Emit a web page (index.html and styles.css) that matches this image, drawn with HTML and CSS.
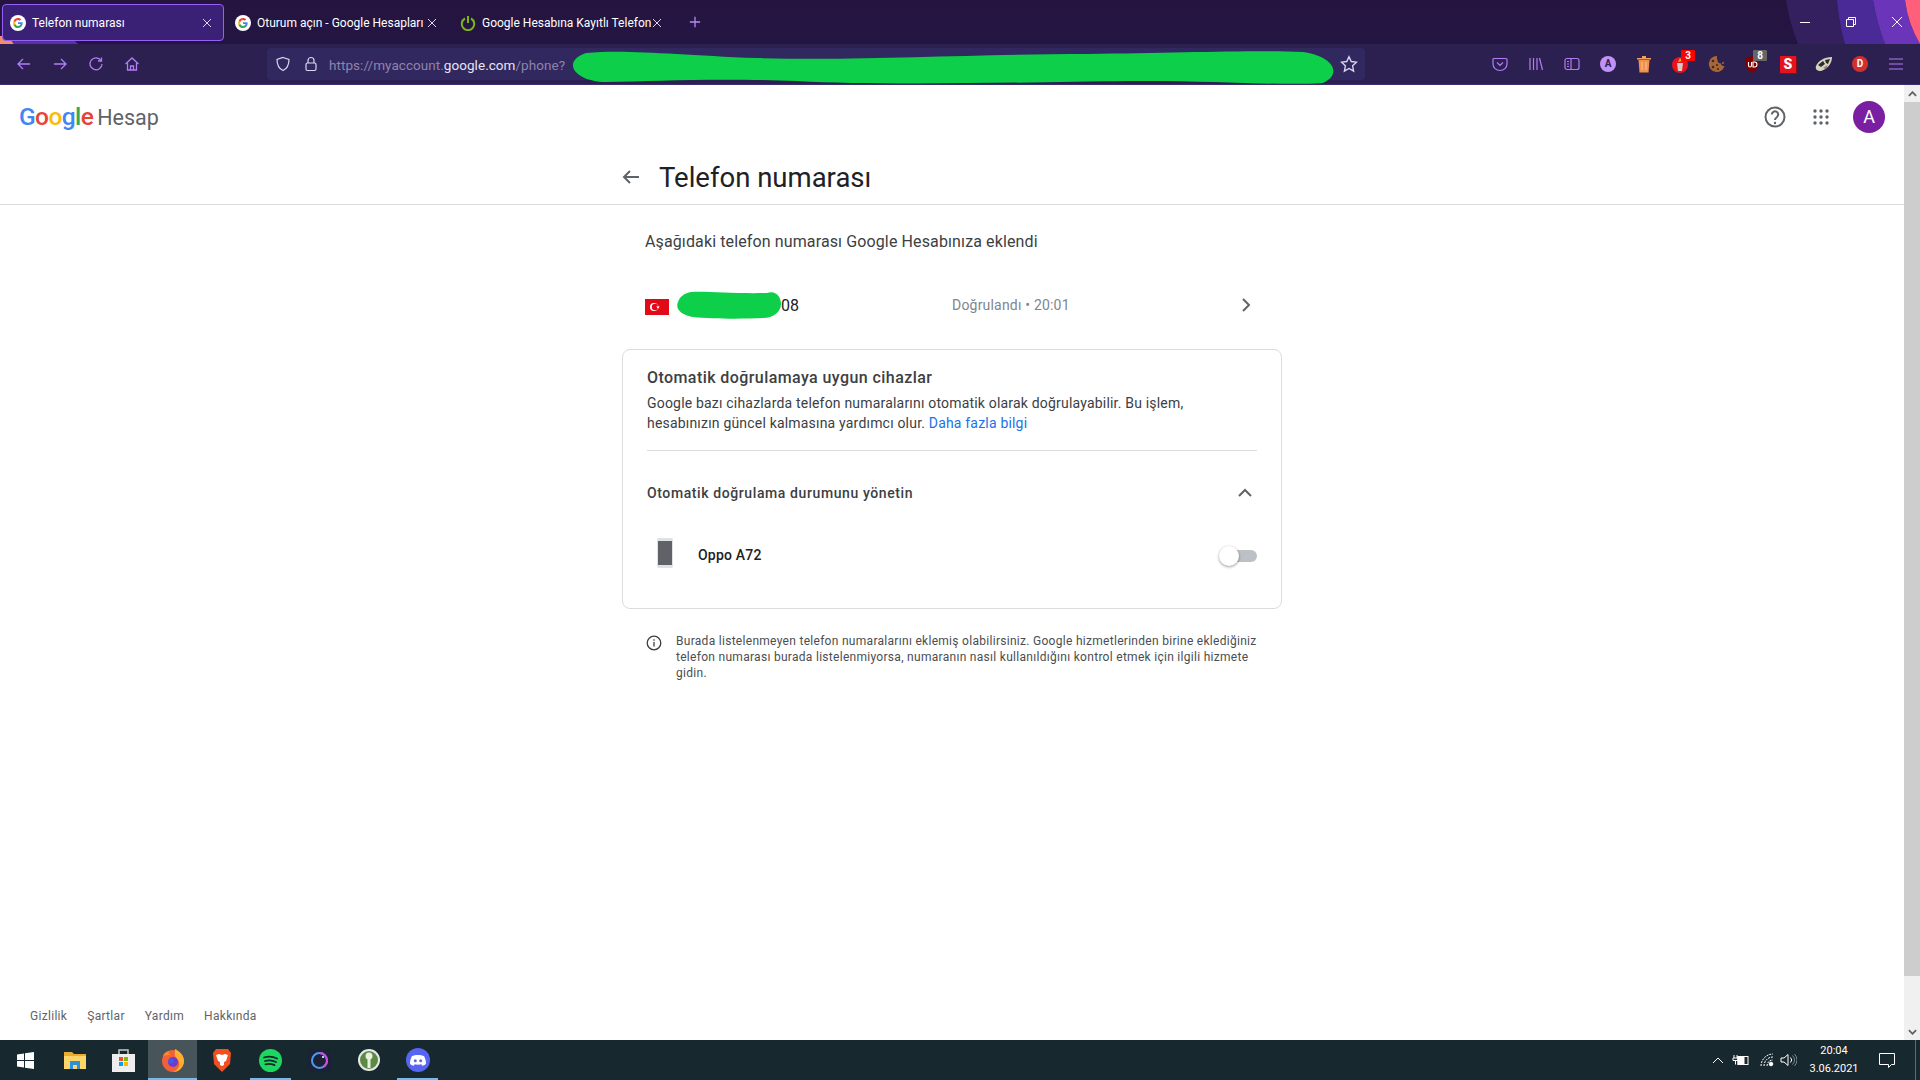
FILE: index.html
```html
<!DOCTYPE html>
<html lang="tr">
<head>
  <meta charset="UTF-8" />
  <title>Telefon numarası</title>
  <link rel="stylesheet" href="styles.css">
</head>
<body>
  <div class="browser">
    <!-- Tab strip -->
    <div class="tabbar">
      <svg class="theme-left" width="90" height="44" viewBox="0 0 90 44"><path d="M0 36 H8 L14 44 H0Z" fill="#f58a6c"/><path d="M8 36 H70 L78 44 H14Z" fill="#5a2fa8"/></svg>
      <svg class="theme-right" width="134" height="44" viewBox="0 0 134 44"><path d="M0 0 H51 Q53 24 59 44 H12 Q4 24 0 0Z" fill="#35205f"/><path d="M51 0 H87 Q91 24 99 44 H59 Q53 24 51 0Z" fill="#4a2a96"/><path d="M87 0 H119 Q122 24 134 44 H99 Q91 24 87 0Z" fill="#6a35b8"/><path d="M119 0 H134 V44 Q122 24 119 0Z" fill="#ff5f7a"/></svg>
      <div class="tab tab-active">
        <svg class="favicon" viewBox="0 0 16 16"><circle cx="8" cy="8" r="8" fill="#fff"/><path d="M12.600 8.200c0-.4 0-.7-.1-1H8v1.900h2.600c-.1.600-.5 1.100-1 1.500v1.200h1.600c.9-.9 1.400-2.100 1.400-3.600z" fill="#4285f4"/><path d="M8 13c1.300 0 2.400-.4 3.200-1.200l-1.600-1.200c-.4.300-1 .5-1.600.5-1.200 0-2.300-.8-2.700-2H3.700v1.300C4.500 12 6.100 13 8 13z" fill="#34a853"/><path d="M5.300 9.100c-.2-.7-.2-1.400 0-2.100V5.700H3.700c-.7 1.300-.7 3.300 0 4.700z" fill="#fbbc05"/><path d="M8 5.100c.7 0 1.300.2 1.800.7l1.400-1.400C10.300 3.500 9.200 3 8 3 6.100 3 4.500 4 3.700 5.700L5.300 7c.4-1.100 1.500-1.900 2.700-1.900z" fill="#ea4335"/></svg>
        <span class="tab-title">Telefon numarası</span>
        <svg class="tab-close" viewBox="0 0 10 10"><path d="M1 1l8 8M9 1l-8 8"/></svg>
      </div>
      <div class="tab">
        <svg class="favicon" viewBox="0 0 16 16"><circle cx="8" cy="8" r="8" fill="#fff"/><path d="M12.600 8.200c0-.4 0-.7-.1-1H8v1.900h2.600c-.1.600-.5 1.100-1 1.500v1.200h1.600c.9-.9 1.400-2.100 1.400-3.600z" fill="#4285f4"/><path d="M8 13c1.300 0 2.400-.4 3.200-1.200l-1.600-1.200c-.4.300-1 .5-1.600.5-1.200 0-2.300-.8-2.700-2H3.700v1.300C4.500 12 6.100 13 8 13z" fill="#34a853"/><path d="M5.300 9.100c-.2-.7-.2-1.400 0-2.100V5.700H3.700c-.7 1.300-.7 3.300 0 4.700z" fill="#fbbc05"/><path d="M8 5.100c.7 0 1.300.2 1.800.7l1.400-1.400C10.300 3.500 9.200 3 8 3 6.100 3 4.500 4 3.700 5.700L5.300 7c.4-1.100 1.500-1.900 2.700-1.900z" fill="#ea4335"/></svg>
        <span class="tab-title">Oturum açın - Google Hesapları</span>
        <svg class="tab-close" viewBox="0 0 10 10"><path d="M1 1l8 8M9 1l-8 8"/></svg>
      </div>
      <div class="tab">
        <svg class="favicon" viewBox="0 0 16 16"><path d="M5 3.500a6.200 6.200 0 1 0 6 0" fill="none" stroke="#7cb518" stroke-width="2"/><path d="M8 1v7" stroke="#7cb518" stroke-width="2"/></svg>
        <span class="tab-title">Google Hesabına Kayıtlı Telefon</span>
        <svg class="tab-close" viewBox="0 0 10 10"><path d="M1 1l8 8M9 1l-8 8"/></svg>
      </div>
      <svg class="new-tab" viewBox="0 0 14 14"><path d="M7 1v12M1 7h12"/></svg>
      <div class="win-controls">
        <svg viewBox="0 0 12 12"><path d="M1 6.500h10"/></svg>
        <svg viewBox="0 0 12 12"><path d="M1.500 3.500h7v7h-7zM3.500 3.500v-2h7v7h-2"/></svg>
        <svg viewBox="0 0 12 12"><path d="M1 1l10 10M11 1L1 11"/></svg>
      </div>
    </div>

    <!-- Nav toolbar -->
    <div class="navbar">
      <svg class="nav-btn" viewBox="0 0 16 16"><path d="M14 8H2.500M7 3L2 8l5 5"/></svg>
      <svg class="nav-btn" viewBox="0 0 16 16"><path d="M2 8h11.500M9 3l5 5-5 5"/></svg>
      <svg class="nav-btn" viewBox="0 0 16 16"><path d="M13 4.500A6 6 0 1 0 14 8M13.500 1.500v3.500H10"/></svg>
      <svg class="nav-btn" viewBox="0 0 16 16"><path d="M1.500 8L8 2l6.500 6M3.500 7v7h9V7M6.500 14v-4h3v4"/></svg>

      <div class="urlbar">
        <svg class="url-icon" viewBox="0 0 16 16"><path d="M8 1.500l6 2c0 5-1.500 9-6 11-4.500-2-6-6-6-11z"/></svg>
        <svg class="url-icon" viewBox="0 0 16 16"><rect x="3" y="7" width="10" height="7.500" rx="1.500"/><path d="M5 7V4.500a3 3 0 0 1 6 0V7"/></svg>
        <span class="url-text">https://myaccount.<b>google.com</b>/phone?</span>
        <svg class="url-star" viewBox="0 0 16 16"><path d="M8 1.500l2 4.300 4.600.6-3.400 3.200.9 4.700L8 12l-4.100 2.300.9-4.700L1.400 6.400 6 5.800z"/></svg>
        <svg class="scribble-url" viewBox="0 0 770 36" preserveAspectRatio="none"><path d="M20 3 C60 -1 110 5 190 8 C300 11 400 4 520 4 C610 3 690 0 735 2 C765 6 775 24 755 33 C710 36 640 30 560 31 C470 32 320 36 230 31 C150 28 90 31 40 32 C10 32 -6 12 20 3Z" fill="#0dcf49"/></svg>
      </div>

      <div class="tools">
        <div class="tool"><svg class="ico-line" viewBox="0 0 16 16"><path d="M2 2.500h12a1 1 0 0 1 1 1V8a7 6.500 0 0 1-14 0V3.500a1 1 0 0 1 1-1zM5 6.500l3 3 3-3"/></svg></div>
        <div class="tool"><svg class="ico-line" viewBox="0 0 16 16"><path d="M2 2v12M5.500 2v12M9 2v12M11.500 2l3 12"/></svg></div>
        <div class="tool"><svg class="ico-line" viewBox="0 0 16 16"><rect x="1" y="2.500" width="14" height="11" rx="2"/><path d="M7 2.500v11M3 5.500h2M3 8h2M3 10.500h2"/></svg></div>
        <div class="tool"><span class="tool-a">A</span></div>
        <div class="tool"><svg width="16" height="18" viewBox="0 0 16 18"><path d="M1 3h14v1.500H1zM6 1h4v2H6z" fill="#f3a05c"/><path d="M2.500 5h11l-1 12.500h-9z" fill="#f2914a"/><path d="M6 7v8M10 7v8" stroke="#f9c397"/></svg></div>
        <div class="tool">
          <svg width="16" height="18" viewBox="0 0 16 18"><circle cx="8" cy="10" r="8" fill="#e8121b"/><path d="M5 8h6l-1 8H6z" fill="#d9c7c7"/><path d="M6 7l2-4 2 3z" fill="#e8b23a"/></svg>
          <span class="badge badge-red">3</span>
        </div>
        <div class="tool"><svg width="17" height="18" viewBox="0 0 17 18"><path d="M9 1a8 8 0 1 0 7.500 10c-2 .5-3.500-1-3.500-2.500C11 8.500 9 7 9.500 4.500 8.500 3.500 9 2 9 1z" fill="#a5673a"/><circle cx="5" cy="6" r="1.300" fill="#4b2a14"/><circle cx="5" cy="12" r="1.300" fill="#4b2a14"/><circle cx="9" cy="10" r="1.100" fill="#4b2a14"/><circle cx="10" cy="14" r="1.100" fill="#4b2a14"/><circle cx="15" cy="8" r="1" fill="#a5673a"/></svg></div>
        <div class="tool">
          <svg width="16" height="19" viewBox="0 0 16 19"><path d="M8 1l7 2c0 7-1 12-7 15C2 15 1 10 1 3z" fill="#800000"/><path d="M4.500 7v3.500a1.500 1.500 0 0 0 3 0V7M9 7v5h1.500a2.500 2.500 0 0 0 0-5z" fill="none" stroke="#fff" stroke-width="1.100"/></svg>
          <span class="badge badge-grey">8</span>
        </div>
        <div class="tool"><span class="tool-s">S</span></div>
        <div class="tool"><svg width="18" height="16" viewBox="0 0 18 16"><path d="M1 10C3 5 9 1 17 1c0 6-4 12-11 14C2 15 0 13 1 10z" fill="#d8d2c4"/><path d="M3 9l5-4 2 3-4 3zM10 4l5-1-2 5-2-1z" fill="#2e2a26"/><path d="M8 12l5-3-2 4z" fill="#8b7a62"/></svg></div>
        <div class="tool"><span class="tool-d">D</span></div>
        <div class="tool"><svg class="ico-line" viewBox="0 0 16 16"><path d="M1 3h14M1 8h14M1 13h14"/></svg></div>
      </div>
    </div>

    <!-- Page + scrollbar -->
    <div class="viewport">
      <div class="page">
        <header class="gbar">
          <div class="logo">
            <span class="g-blue">G</span><span class="g-red">o</span><span class="g-yellow">o</span><span class="g-blue">g</span><span class="g-green">l</span><span class="g-red">e</span>
            <span class="logo-word">Hesap</span>
          </div>
          <div class="gbar-right">
            <svg class="help" viewBox="0 0 24 24"><circle cx="12" cy="12" r="9.500"/><path d="M8.800 9.500a3.200 3.200 0 1 1 5 2.700c-1.100.8-1.800 1.300-1.800 2.800"/><circle class="dot" cx="12" cy="18" r="1.200"/></svg>
            <svg class="apps" viewBox="0 0 16 16"><circle cx="2" cy="2" r="1.700"/><circle cx="8" cy="2" r="1.700"/><circle cx="14" cy="2" r="1.700"/><circle cx="2" cy="8" r="1.700"/><circle cx="8" cy="8" r="1.700"/><circle cx="14" cy="8" r="1.700"/><circle cx="2" cy="14" r="1.700"/><circle cx="8" cy="14" r="1.700"/><circle cx="14" cy="14" r="1.700"/></svg>
            <div class="avatar">A</div>
          </div>
        </header>

        <div class="titlebar">
          <div class="titlebar-inner">
            <svg class="back" viewBox="0 0 24 24"><path d="M20 12H5M11 6l-6 6 6 6"/></svg>
            <h1>Telefon numarası</h1>
          </div>
        </div>

        <main class="content">
          <p class="intro">Aşağıdaki telefon numarası Google Hesabınıza eklendi</p>

          <div class="phone-row">
            <div class="phone-left">
              <svg class="flag" viewBox="0 0 24 16"><rect width="24" height="16" fill="#e30a17"/><circle cx="9" cy="8" r="4" fill="#fff"/><circle cx="10" cy="8" r="3.200" fill="#e30a17"/><path d="M13 6.300l.5 1.300 1.400 0-1.100.9.400 1.300-1.200-.8-1.100.8.400-1.300-1.100-.9 1.400 0z" fill="#fff"/></svg>
              <svg class="scribble-phone" viewBox="0 0 104 28"><path d="M14 1C30 0 60 3 90 2c8-3 14 3 14 11 0 8-8 14-18 14-20 1-50 1-70-1C4 24-2 18 1 11 3 5 8 2 14 1z" fill="#0dcf49"/></svg>
              <span class="phone-num">08</span>
            </div>
            <span class="phone-status">Doğrulandı • 20:01</span>
            <svg class="chev" viewBox="0 0 24 24"><path d="M9 6l6 6-6 6"/></svg>
          </div>

          <section class="card">
            <div class="card-top">
              <h2>Otomatik doğrulamaya uygun cihazlar</h2>
              <p>Google bazı cihazlarda telefon numaralarını otomatik olarak doğrulayabilir. Bu işlem,<br>hesabınızın güncel kalmasına yardımcı olur. <a href="#">Daha fazla bilgi</a></p>
            </div>
            <div class="manage-row">
              <span>Otomatik doğrulama durumunu yönetin</span>
              <svg class="chev-up" viewBox="0 0 24 24"><path d="M6 15l6-6 6 6"/></svg>
            </div>
            <div class="device-row">
              <svg class="device" width="18" height="30" viewBox="0 0 18 30"><rect x="1" width="16" height="30" rx="2" fill="#dfe1e5"/><rect x="2" y="3" width="14" height="24" fill="#5f6368"/></svg>
              <span class="device-name">Oppo A72</span>
              <div class="toggle"><div class="toggle-knob"></div></div>
            </div>
          </section>

          <div class="note">
            <svg class="info" viewBox="0 0 16 16"><circle cx="8" cy="8" r="6.800"/><path d="M8 7v4.500"/><path d="M8 4.300v1.400"/></svg>
            <p>Burada listelenmeyen telefon numaralarını eklemiş olabilirsiniz. Google hizmetlerinden birine eklediğiniz<br>telefon numarası burada listelenmiyorsa, numaranın nasıl kullanıldığını kontrol etmek için ilgili hizmete<br>gidin.</p>
          </div>
        </main>

        <footer class="foot">
          <a href="#">Gizlilik</a>
          <a href="#">Şartlar</a>
          <a href="#">Yardım</a>
          <a href="#">Hakkında</a>
        </footer>
      </div>

      <div class="scrollbar">
        <div class="sb-arrow"><svg viewBox="0 0 10 6"><path d="M1 5l4-4 4 4"/></svg></div>
        <div class="sb-track"><div class="sb-thumb"></div></div>
        <div class="sb-arrow"><svg viewBox="0 0 10 6"><path d="M1 1l4 4 4-4"/></svg></div>
      </div>
    </div>

    <!-- Windows taskbar -->
    <div class="taskbar">
      <div class="task"><svg width="17" height="17" viewBox="0 0 17 17"><path d="M0 2.500l7-1v6.500H0zM8 1.300L17 0v8H8zM0 9h7v6.500l-7-1zM8 9h9v8l-9-1.300z" fill="#fff"/></svg></div>
      <div class="task"><svg width="22" height="18" viewBox="0 0 22 18"><path d="M0 1h8l2 2h12v15H0z" fill="#e8ad2c"/><path d="M0 5h22v13H0z" fill="#fcd669"/><path d="M6 10h10v8h-3v-4H9v4H6z" fill="#2f8fd8"/></svg></div>
      <div class="task"><svg width="23" height="24" viewBox="0 0 23 24"><path d="M7 6V2h9v4" fill="none" stroke="#c8c8c8" stroke-width="1.500"/><path d="M0 6h23v18H0z" fill="#eeeeee"/><path d="M7 9h4v4H7z" fill="#f25022"/><path d="M12 9h4v4h-4z" fill="#7fba00"/><path d="M7 14h4v4H7z" fill="#00a4ef"/><path d="M12 14h4v4h-4z" fill="#ffb900"/></svg></div>
      <div class="task task-active"><svg width="24" height="24" viewBox="0 0 24 24"><circle cx="12" cy="13" r="11" fill="#f2603a"/><path d="M14 1c4 2 9 6 9 12 0 6-5 11-11 11 5-2 7-6 6-10-.5-3-3-4-4-6-.5-2 0-5 0-7z" fill="#ffb02e"/><path d="M2 8c1-3 3-4 6-5-1 2 0 3 2 4-3 0-6 0-8 1z" fill="#ff8a2b"/><circle cx="12" cy="14" r="5" fill="#6a3bd2"/><circle cx="10" cy="13" r="2.500" fill="#3b61e0"/></svg></div>
      <div class="task"><svg width="20" height="24" viewBox="0 0 20 24"><path d="M4 1h12l3 4-1 11-8 8-8-8L1 5z" fill="#f1501e"/><path d="M4 7l3-1 3 1 3-1 3 1-2 6-2 1v3l-2 1-2-1v-3l-2-1z" fill="#fff"/></svg></div>
      <div class="task task-open"><svg width="23" height="23" viewBox="0 0 23 23"><circle cx="11.500" cy="11.500" r="11.500" fill="#1ed760"/><path d="M5 8.500c4.500-1.300 9-1 13 1M6 12c3.500-1 7.500-.8 11 1M6.500 15.300c3-.8 6-.6 9 .8" fill="none" stroke="#15262c" stroke-width="1.800" stroke-linecap="round"/></svg></div>
      <div class="task"><svg width="23" height="23" viewBox="0 0 23 23"><rect width="23" height="23" rx="5" fill="#1b2238"/><circle cx="11.500" cy="11.500" r="7.500" fill="none" stroke="#4f9be8" stroke-width="2"/><path d="M11.500 4a7.500 7.500 0 0 1 7.500 7.500A7.500 7.500 0 0 1 15 18" fill="none" stroke="#c94fd8" stroke-width="2"/><circle cx="15" cy="8" r="1" fill="#fff"/></svg></div>
      <div class="task"><svg width="22" height="22" viewBox="0 0 22 22"><circle cx="11" cy="11" r="10" fill="#5c8a46" stroke="#e8e8e8" stroke-width="2"/><circle cx="11" cy="7" r="3.500" fill="#e8f0dd"/><path d="M9.500 9h3v10h-3z" fill="#e8f0dd"/></svg></div>
      <div class="task task-open"><svg width="24" height="24" viewBox="0 0 24 24"><circle cx="12" cy="12" r="12" fill="#5865f2"/><path d="M6 8c3-1.500 9-1.500 12 0 1.300 2.500 2 5 2 8-1.300 1-2.500 1.500-3.800 1.700l-.9-1.400c-2 .6-4.600.6-6.600 0l-.9 1.400C6.500 17.500 5.300 17 4 16c0-3 .7-5.500 2-8z" fill="#fff"/><circle cx="9.300" cy="12.800" r="1.500" fill="#5865f2"/><circle cx="14.700" cy="12.800" r="1.500" fill="#5865f2"/></svg></div>

      <div class="tray">
        <svg class="tray-ico tray-caret" width="12" height="8" viewBox="0 0 12 8"><path d="M1 7l5-5 5 5"/></svg>
        <svg class="tray-ico tray-batt" width="17" height="12" viewBox="0 0 17 12"><path d="M2 1v3M5 1v3M1 4h5v2.500H1zM3.500 6.500v4"/><rect x="6" y="2.500" width="10" height="8"/><rect class="fill" x="6" y="2.500" width="6" height="8"/></svg>
        <svg class="tray-ico tray-wifi" width="14" height="14" viewBox="0 0 14 14"><path d="M1 13c0-6 5-12 12-12M4 13c0-5 4-9 9-9M7 13c0-3 2-6 6-6" stroke-dasharray="2 1"/><circle class="fill" cx="11" cy="11" r="1.800"/></svg>
        <svg class="tray-ico tray-vol" width="17" height="14" viewBox="0 0 17 14"><path d="M1 5v4h3l4 3.500v-11L4 5zM10.500 4.500a3.500 3.500 0 0 1 0 5"/><path class="dim" d="M12.500 2.500a6 6 0 0 1 0 9M14.500 1a8.500 8.500 0 0 1 0 12"/></svg>
        <div class="clock"><span>20:04</span><span>3.06.2021</span></div>
        <svg class="tray-ico notif" width="16" height="15" viewBox="0 0 16 15"><path d="M.5.500h15v11h-3l-3 3v-3H.5z"/></svg>
        <div class="show-desktop"></div>
      </div>
    </div>
  </div>
</body>
</html>
```

FILE: styles.css
```css
* {
  box-sizing: border-box;
  margin: 0;
  padding: 0;
}

html, body {
  width: 100%;
  height: 100%;
  overflow: hidden;
}

body {
  font-family: Roboto, "Liberation Sans", sans-serif;
  color: #3c4043;
  background: #fff;
}

a {
  text-decoration: none;
}

.browser {
  display: flex;
  flex-direction: column;
  height: 100vh;
}

/* tab strip */
.tabbar {
  position: relative;
  height: 44px;
  flex-shrink: 0;
  display: flex;
  align-items: flex-start;
  padding: 4px 0 0 2px;
  background: linear-gradient(180deg, #26143f, #231543);
  color: #fff;
}

.theme-left {
  position: absolute;
  top: 0;
  left: 0;
}

.theme-right {
  position: absolute;
  top: 0;
  right: 0;
}

.tab {
  position: relative;
  display: flex;
  align-items: center;
  width: 225px;
  height: 37px;
  padding-left: 9px;
  font-size: 12px;
}

.tab-active {
  width: 222px;
  padding-left: 7px;
  background: #3b2176;
  border: 1px solid #9561f5;
  border-radius: 4px;
}

.tab-active + .tab {
  margin-left: 2px;
}

.favicon {
  width: 16px;
  height: 16px;
  flex-shrink: 0;
}

.tab-title {
  flex: 0 0 170px;
  margin-left: 6px;
  white-space: nowrap;
}

.tab-active .tab-title {
  flex-basis: 164px;
}

.tab-close {
  width: 10px;
  height: 10px;
  fill: none;
  stroke: #ddd6ee;
  stroke-width: 1;
}

.tab-active .tab-close {
  margin-left: 6px;
}

.new-tab {
  position: relative;
  width: 12px;
  height: 12px;
  margin: 12px 0 0 13px;
  fill: none;
  stroke: #b48cf2;
  stroke-width: 1.500;
}

.win-controls {
  position: absolute;
  top: 16px;
  right: 17px;
  display: flex;
  gap: 34px;
}

.win-controls svg {
  width: 12px;
  height: 12px;
  fill: none;
  stroke: #fff;
  stroke-width: 1;
}

/* toolbar */
.navbar {
  position: relative;
  height: 41px;
  flex-shrink: 0;
  display: flex;
  align-items: center;
  padding-left: 6px;
  background: #2b2050;
  border-bottom: 1px solid #3d2d74;
}

.nav-btn {
  width: 36px;
  height: 16px;
  fill: none;
  stroke: #b27cf6;
  stroke-width: 1.300;
}

.urlbar {
  position: relative;
  display: flex;
  align-items: center;
  width: 1098px;
  height: 32px;
  margin-left: 117px;
  background: #322860;
  border-radius: 4px;
  color: #8d84ab;
  font-size: 13.500px;
}

.url-icon {
  width: 16px;
  height: 16px;
  margin-left: 8px;
  fill: none;
  stroke: #ddd7ee;
  stroke-width: 1.200;
}

.url-icon + .url-icon {
  margin-left: 12px;
}

.url-text {
  margin: 1px 0 0 10px;
  letter-spacing: 0.050px;
}

.url-text b {
  font-weight: 400;
  color: #e8e4f2;
}

.url-star {
  width: 18px;
  height: 18px;
  margin-left: auto;
  margin-right: 7px;
  fill: none;
  stroke: #ddd7ee;
  stroke-width: 1.200;
}

.scribble-url {
  position: absolute;
  left: 299px;
  top: 2px;
  width: 772px;
  height: 36px;
}

.tools {
  display: flex;
  margin-left: auto;
  padding-right: 6px;
}

.tool {
  position: relative;
  display: flex;
  align-items: center;
  justify-content: center;
  width: 36px;
  height: 30px;
}

.ico-line {
  width: 16px;
  height: 16px;
  fill: none;
  stroke: #b27cf6;
  stroke-width: 1.200;
}

.tool-a {
  width: 16px;
  height: 16px;
  border-radius: 50%;
  background: #c292f7;
  color: #2b2050;
  font-size: 10px;
  font-weight: 700;
  line-height: 16px;
  text-align: center;
}

.tool-s {
  width: 16px;
  height: 17px;
  background: #e4141f;
  box-shadow: 1px 1px 0 #8c0c12;
  color: #fff;
  font-size: 14px;
  font-weight: 900;
  line-height: 17px;
  text-align: center;
}

.tool-d {
  width: 16px;
  height: 16px;
  border-radius: 50%;
  background: #d32f2f;
  color: #fff;
  font-size: 10px;
  font-weight: 700;
  line-height: 16px;
  text-align: center;
}

.badge {
  position: absolute;
  top: 1px;
  left: 19px;
  width: 14px;
  height: 11px;
  border-radius: 1px;
  color: #fff;
  font-size: 10px;
  font-weight: 700;
  line-height: 11px;
  text-align: center;
}

.badge-red {
  background: #f00;
}

.badge-grey {
  background: #666;
}

/* page */
.viewport {
  flex: 1;
  display: flex;
  min-height: 0;
}

.page {
  flex: 1;
  display: flex;
  flex-direction: column;
  background: #fff;
}

.gbar {
  height: 63px;
  margin-bottom: 1px;
  flex-shrink: 0;
  display: flex;
  align-items: center;
  justify-content: space-between;
  padding: 0 19px 0 19px;
}

.logo {
  display: flex;
  align-items: baseline;
  font-size: 24.500px;
  font-weight: 500;
  letter-spacing: -0.600px;
}

.g-blue { color: #4285f4; }
.g-red { color: #ea4335; }
.g-yellow { color: #fbbc05; }
.g-green { color: #34a853; }

.logo-word {
  margin-left: 4px;
  font-size: 21.500px;
  font-weight: 400;
  letter-spacing: 0;
  color: #5f6368;
}

.gbar-right {
  display: flex;
  align-items: center;
  margin-top: 1px;
}

.help {
  width: 24px;
  height: 24px;
  fill: none;
  stroke: #5f6368;
  stroke-width: 2;
}

.help .dot {
  fill: #5f6368;
  stroke: none;
}

.apps {
  width: 16px;
  height: 16px;
  margin-left: 26px;
  fill: #5f6368;
}

.avatar {
  width: 32px;
  height: 32px;
  margin-left: 24px;
  border-radius: 50%;
  background: #7b1fa2;
  color: #fff;
  font-size: 18px;
  line-height: 32px;
  text-align: center;
}

.titlebar {
  height: 56px;
  flex-shrink: 0;
  border-bottom: 1px solid #dadce0;
}

.titlebar-inner {
  display: flex;
  align-items: center;
  width: 660px;
  height: 55px;
  margin: 0 auto;
}

.back {
  width: 24px;
  height: 24px;
  margin-left: -3px;
  margin-right: 16px;
  fill: none;
  stroke: #5f6368;
  stroke-width: 2;
}

h1 {
  margin-top: 2px;
  font-size: 27.500px;
  font-weight: 400;
  color: #202124;
}

.content {
  width: 660px;
  margin: 0 auto;
}

.intro {
  padding: 25px 0 0 23px;
  font-size: 16px;
  line-height: 24px;
  letter-spacing: 0.120px;
}

.phone-row {
  display: flex;
  align-items: center;
  height: 56px;
  margin-top: 23px;
  padding: 0 24px 0 23px;
  font-size: 14px;
}

.phone-left {
  display: flex;
  align-items: center;
  width: 307px;
}

.flag {
  width: 24px;
  height: 16px;
  margin-top: 4px;
}

.scribble-phone {
  width: 104px;
  height: 28px;
  margin-left: 8px;
}

.phone-num {
  font-size: 16px;
  color: #202124;
}

.phone-status {
  color: #80868b;
  letter-spacing: 0.200px;
}

.chev {
  width: 24px;
  height: 24px;
  margin-left: auto;
  fill: none;
  stroke: #5f6368;
  stroke-width: 2;
}

.card {
  height: 260px;
  margin-top: 16px;
  padding: 16px 24px 0 24px;
  border: 1px solid #dadce0;
  border-radius: 8px;
}

.card-top {
  padding-bottom: 17px;
  border-bottom: 1px solid #dadce0;
}

h2 {
  font-size: 16px;
  font-weight: 500;
  line-height: 24px;
  letter-spacing: 0.420px;
  color: #3c4043;
}

.card-top p {
  margin-top: 3px;
  font-size: 14px;
  line-height: 20px;
  letter-spacing: 0.190px;
}

.card-top a {
  color: #1a73e8;
}

.manage-row {
  display: flex;
  align-items: center;
  justify-content: space-between;
  height: 84px;
  margin-bottom: -2px;
  font-size: 14px;
  font-weight: 500;
  letter-spacing: 0.600px;
}

.chev-up {
  width: 24px;
  height: 24px;
  fill: none;
  stroke: #5f6368;
  stroke-width: 2;
}

.device-row {
  display: flex;
  align-items: center;
  height: 44px;
  padding-left: 9px;
}

.device {
  margin-top: -4px;
}

.device-name {
  margin-left: 24px;
  font-size: 14px;
  font-weight: 500;
  letter-spacing: 0.200px;
  color: #202124;
}

.toggle {
  position: relative;
  width: 32px;
  height: 12px;
  margin-left: auto;
  margin-top: 2px;
  border-radius: 6px;
  background: #bdc1c6;
}

.toggle-knob {
  position: absolute;
  top: -4px;
  left: -6px;
  width: 20px;
  height: 20px;
  border-radius: 50%;
  background: #fff;
  box-shadow: 0 1px 3px rgba(0,0,0,0.4);
}

.note {
  display: flex;
  margin-top: 24px;
  padding-left: 24px;
  font-size: 12px;
  line-height: 16px;
  letter-spacing: 0.290px;
}

.info {
  width: 16px;
  height: 16px;
  margin-top: 2px;
  flex-shrink: 0;
  fill: none;
  stroke: #3c4043;
  stroke-width: 1.300;
}

.note p {
  margin-left: 14px;
  color: #4a4e52;
}

.foot {
  display: flex;
  gap: 20px;
  margin-top: auto;
  padding: 0 0 16px 30px;
  font-size: 12px;
  line-height: 16px;
}

.foot a {
  color: #5f6368;
  letter-spacing: 0.300px;
}

/* scrollbar */
.scrollbar {
  width: 16px;
  flex-shrink: 0;
  display: flex;
  flex-direction: column;
  background: #f0f0f0;
}

.sb-arrow {
  display: flex;
  align-items: center;
  justify-content: center;
  height: 17px;
}

.sb-arrow svg {
  width: 9px;
  height: 6px;
  fill: none;
  stroke: #606060;
  stroke-width: 2;
}

.sb-track {
  flex: 1;
}

.sb-thumb {
  height: 874px;
  background: #cdcdcd;
}

/* taskbar */
.taskbar {
  height: 40px;
  flex-shrink: 0;
  display: flex;
  background: #18282f;
  color: #fff;
}

.task {
  position: relative;
  display: flex;
  align-items: center;
  justify-content: center;
  width: 49px;
}

.task:first-child {
  width: 50px;
}

.task-active {
  background: #47545a;
}

.task-active::after,
.task-open::after {
  content: "";
  position: absolute;
  bottom: 0;
  height: 2px;
  background: #76b9ed;
}

.task-active::after {
  left: 0;
  right: 0;
}

.task-open::after {
  left: 4px;
  right: 4px;
}

.tray {
  display: flex;
  align-items: center;
  margin-left: auto;
}

.tray-ico {
  margin-right: 9px;
  fill: none;
  stroke: #fff;
  stroke-width: 1;
}

.tray-ico .fill {
  fill: #fff;
}

.tray-ico .dim {
  stroke: #7d878c;
}

.tray-caret {
  margin-right: 8px;
}

.tray-batt {
  margin-right: 11px;
}

.tray-wifi {
  margin-right: 6px;
}

.tray-vol {
  margin-right: 2px;
}

.clock {
  display: flex;
  flex-direction: column;
  align-items: center;
  width: 70px;
  font-size: 11px;
  line-height: 18px;
}

.notif {
  margin: 0 0 0 10px;
}

.show-desktop {
  width: 1px;
  height: 40px;
  margin-left: 20px;
  margin-right: 4px;
  background: #5f6b70;
}
```
